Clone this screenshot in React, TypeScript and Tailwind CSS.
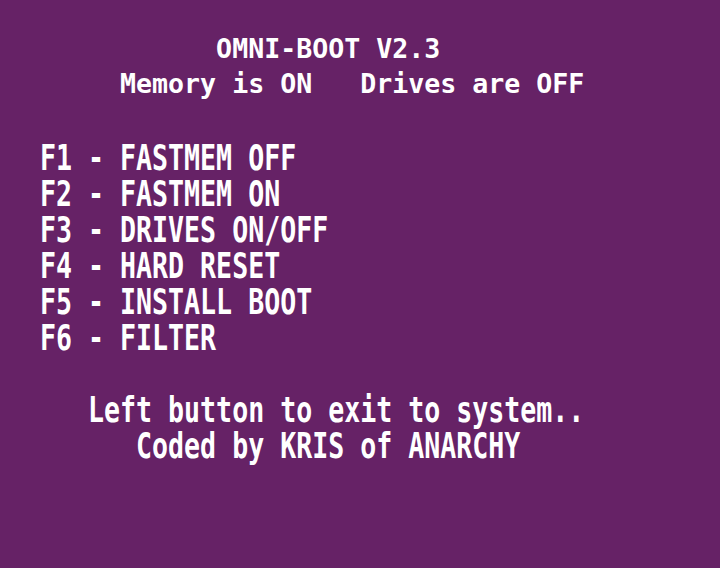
import React from "react";

const menu: string[] = [
  "F1 - FASTMEM OFF",
  "F2 - FASTMEM ON",
  "F3 - DRIVES ON/OFF",
  "F4 - HARD RESET",
  "F5 - INSTALL BOOT",
  "F6 - FILTER",
];

// one text row, tall rows get stretched like the amiga topaz font
const Row: React.FC<{ text: string; tall?: boolean; h?: string }> = ({
  text,
  tall,
  h,
}) => (
  <div className={`${h ?? "h-[36px]"} flex items-center whitespace-pre`}>
    <div
      className={
        tall ? "leading-[26px] scale-y-[1.34] origin-center" : "leading-[32px]"
      }
    >
      {text}
    </div>
  </div>
);

const App: React.FC = () => {
  return (
    <div
      className="w-full h-screen bg-[#662266] text-white font-bold text-[26.6px] pl-[40px] pt-[32px] overflow-hidden"
      style={{ fontFamily: '"DejaVu Sans Mono", "Liberation Mono", monospace' }}
    >
      <Row text={"           OMNI-BOOT V2.3"} h="h-[34px]" />
      <Row text={"     Memory is ON   Drives are OFF"} />

      <div className="mt-[38px]">
        {menu.map((m) => (
          <Row key={m} text={m} tall />
        ))}
      </div>

      <div className="mt-[36px]">
        <Row text={"   Left button to exit to system.."} tall />
        <Row text={"      Coded by KRIS of ANARCHY"} tall />
      </div>
    </div>
  );
};

export default App;
